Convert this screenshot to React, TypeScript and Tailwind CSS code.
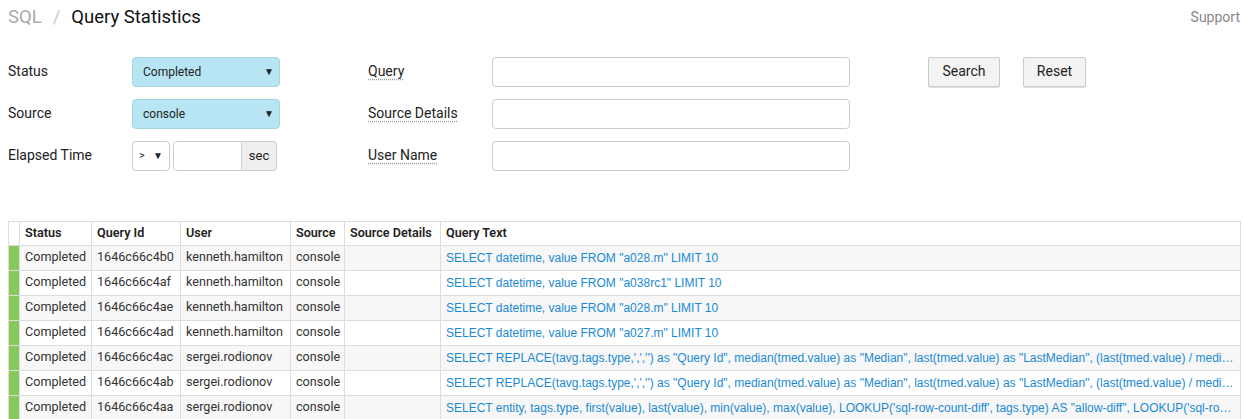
// App.tsx
const rows = [
  { id: "1646c66c4b0", user: "kenneth.hamilton", text: 'SELECT datetime, value FROM "a028.m" LIMIT 10' },
  { id: "1646c66c4af", user: "kenneth.hamilton", text: 'SELECT datetime, value FROM "a038rc1" LIMIT 10' },
  { id: "1646c66c4ae", user: "kenneth.hamilton", text: 'SELECT datetime, value FROM "a028.m" LIMIT 10' },
  { id: "1646c66c4ad", user: "kenneth.hamilton", text: 'SELECT datetime, value FROM "a027.m" LIMIT 10' },
  {
    id: "1646c66c4ac",
    user: "sergei.rodionov",
    text: 'SELECT REPLACE(tavg.tags.type,\',\',\'\') as "Query Id", median(tmed.value) as "Median", last(tmed.value) as "LastMedian", (last(tmed.value) / median(tmed.value)) as "Ratio"',
  },
  {
    id: "1646c66c4ab",
    user: "sergei.rodionov",
    text: 'SELECT REPLACE(tavg.tags.type,\',\',\'\') as "Query Id", median(tmed.value) as "Median", last(tmed.value) as "LastMedian", (last(tmed.value) / median(tmed.value)) as "Ratio"',
  },
  {
    id: "1646c66c4aa",
    user: "sergei.rodionov",
    text: "SELECT entity, tags.type, first(value), last(value), min(value), max(value), LOOKUP('sql-row-count-diff', tags.type) AS \"allow-diff\", LOOKUP('sql-row-count-max', tags.type)",
  },
];

function BlueSelect({ value }: { value: string }) {
  return (
    <div className="flex h-[30px] w-[148px] items-center justify-between rounded-[4px] border border-[#a9d4e2] bg-[#b8e5f3] pl-[10px] pr-[5px] text-[12px] text-[#222]">
      <span>{value}</span>
      <span className="text-[10px]">▼</span>
    </div>
  );
}

function TextInput() {
  return <div className="h-[30px] w-[358px] rounded-[4px] border border-[#ccc] bg-white" />;
}

export default function App() {
  return (
    <div className="h-[419px] w-[1243px] overflow-hidden bg-white font-['Roboto','Open_Sans',sans-serif] text-[#222]">
      <div className="flex items-center justify-between pl-[8px] pr-[3px] pt-[4px]">
        <div className="flex items-center text-[18.5px]">
          <span className="text-[#aaa]">SQL</span>
          <span className="mx-[11px] text-[#ccc]">/</span>
          <span className="text-[#111]">Query Statistics</span>
        </div>
        <span className="text-[14px] text-[#888]">Support</span>
      </div>

      <div className="mt-[25px] flex pl-[8px]">
        <div className="flex flex-col gap-[12px]">
          <div className="flex items-center">
            <span className="w-[124px] text-[14px]">Status</span>
            <BlueSelect value="Completed" />
          </div>
          <div className="flex items-center">
            <span className="w-[124px] text-[14px]">Source</span>
            <BlueSelect value="console" />
          </div>
          <div className="flex items-center">
            <span className="w-[124px] text-[14px]">Elapsed Time</span>
            <div className="flex h-[30px] w-[38px] items-center justify-between rounded-[4px] border border-[#ccc] px-[6px] text-[10px]">
              <span className="text-[11px]">&gt;</span>
              <span>▼</span>
            </div>
            <div className="ml-[3px] flex h-[30px]">
              <div className="w-[69px] rounded-l-[4px] border border-[#ccc]" />
              <div className="flex w-[35px] items-center justify-center rounded-r-[4px] border border-l-0 border-[#ccc] bg-[#eee] text-[13px]">
                sec
              </div>
            </div>
          </div>
        </div>

        <div className="ml-[88px] flex flex-col gap-[12px]">
          {["Query", "Source Details", "User Name"].map((label) => (
            <div key={label} className="flex items-center">
              <span className="w-[124px] text-[14px]">
                <span className="underline decoration-dotted decoration-[#999] underline-offset-[3px]">{label}</span>
              </span>
              <TextInput />
            </div>
          ))}
        </div>

        <div className="ml-[78px] flex items-start gap-[23px]">
          <button className="h-[30px] w-[72px] rounded-[2px] border border-[#ccc] bg-[#f3f3f3] text-[14px] shadow-[0_1px_1px_rgba(0,0,0,0.15)]">
            Search
          </button>
          <button className="h-[30px] w-[63px] rounded-[2px] border border-[#ccc] bg-[#f3f3f3] text-[14px] shadow-[0_1px_1px_rgba(0,0,0,0.15)]">
            Reset
          </button>
        </div>
      </div>

      <div className="ml-[8px] mt-[50px] w-[1233px]">
        <table className="w-full table-fixed border-collapse text-[12.6px]">
          <colgroup>
            <col className="w-[11px]" />
            <col className="w-[72px]" />
            <col className="w-[89px]" />
            <col className="w-[110px]" />
            <col className="w-[54px]" />
            <col className="w-[96px]" />
            <col />
          </colgroup>
          <thead>
            <tr className="h-[24px] text-left">
              <th className="border border-[#ddd]" />
              {["Status", "Query Id", "User", "Source", "Source Details", "Query Text"].map((h) => (
                <th key={h} className="border border-[#ddd] px-[5px] font-semibold text-[#222]">
                  {h}
                </th>
              ))}
            </tr>
          </thead>
          <tbody>
            {rows.map((r, i) => (
              <tr key={r.id} className={i % 2 === 0 ? "h-[25px] bg-[#f7f7f7]" : "h-[25px] bg-white"}>
                <td className="border border-[#ddd] bg-[#86c859]" />
                <td className="border border-[#ddd] px-[5px] text-[#333]">Completed</td>
                <td className="border border-[#ddd] px-[5px] text-[#333]">{r.id}</td>
                <td className="border border-[#ddd] px-[5px] text-[#333]">{r.user}</td>
                <td className="border border-[#ddd] px-[5px] text-[#333]">console</td>
                <td className="border border-[#ddd]" />
                <td className="truncate border border-[#ddd] px-[5px] font-['Liberation_Sans',Arial,sans-serif] text-[12px] text-[#1a8ad4]">
                  {r.text}
                </td>
              </tr>
            ))}
          </tbody>
        </table>
      </div>
    </div>
  );
}
